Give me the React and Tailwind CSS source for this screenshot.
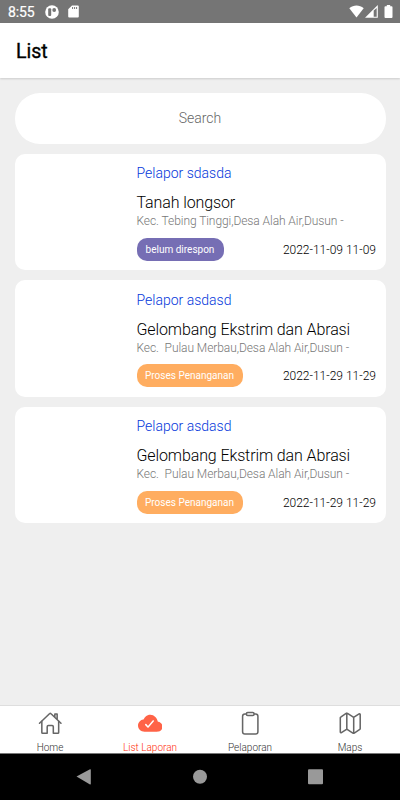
import React from 'react';
import { IoHomeOutline, IoCloudDone, IoClipboardOutline, IoMapOutline } from 'react-icons/io5';

const reports = [
  {
    reporter: 'Pelapor sdasda',
    title: 'Tanah longsor',
    address: 'Kec. Tebing Tinggi,Desa Alah Air,Dusun -',
    status: 'belum direspon',
    statusClass: 'w-[87px] bg-[#766eb4]',
    date: '2022-11-09 11-09',
  },
  {
    reporter: 'Pelapor asdasd',
    title: 'Gelombang Ekstrim dan Abrasi',
    address: 'Kec.  Pulau Merbau,Desa Alah Air,Dusun -',
    status: 'Proses Penanganan',
    statusClass: 'w-[106px] bg-[#ffad60]',
    date: '2022-11-29 11-29',
  },
  {
    reporter: 'Pelapor asdasd',
    title: 'Gelombang Ekstrim dan Abrasi',
    address: 'Kec.  Pulau Merbau,Desa Alah Air,Dusun -',
    status: 'Proses Penanganan',
    statusClass: 'w-[106px] bg-[#ffad60]',
    date: '2022-11-29 11-29',
  },
];

const tabs = [
  { label: 'Home', icon: IoHomeOutline },
  { label: 'List Laporan', icon: IoCloudDone, active: true },
  { label: 'Pelaporan', icon: IoClipboardOutline },
  { label: 'Maps', icon: IoMapOutline },
];

const StatusBar = () => (
  <div className="h-[23px] shrink-0 bg-[#757575] flex items-center pl-[8px] pr-[7px] text-white">
    <span className="text-[14px] leading-none w-[37px] whitespace-nowrap pt-px tracking-[-0.1px] [-webkit-text-stroke:0.2px_white]">8:55</span>
    <svg className="w-[14px] h-[14px]" viewBox="0 0 14 14">
      <circle cx="7" cy="7" r="6.8" fill="#fff" />
      <rect x="3.2" y="3.2" width="3" height="7.8" rx="1" fill="#757575" />
      <circle cx="9.2" cy="5" r="1.9" fill="#757575" />
    </svg>
    <svg className="w-[11px] h-[13px] ml-[9px]" viewBox="0 0 11 13">
      <path d="M4 0.5h5.8a1 1 0 0 1 1 1v10a1 1 0 0 1-1 1H1.2a1 1 0 0 1-1-1V4.3z" fill="#fff" />
      <path d="M4.6 2v2M6.6 2v2M8.6 2v2" stroke="#757575" strokeWidth="1" />
    </svg>
    <div className="ml-auto flex items-center">
      <svg className="w-[15px] h-[13px]" viewBox="0 0 15 13">
        <path d="M0.3 3.2C4.5-0.4 10.5-0.4 14.7 3.2L7.5 12.5z" fill="#fff" />
      </svg>
      <svg className="w-[13px] h-[13px] ml-[1px]" viewBox="0 0 13 13">
        <path d="M0 12.8L12.8 0v12.8z" fill="#fff" />
        <path d="M8.7 5.4L11.7 3v8.7h-3z" fill="#757575" />
      </svg>
      <svg className="w-[9px] h-[13px] ml-[6px]" viewBox="0 0 9 13">
        <path d="M2.8 0h3.4v1.3h1.4a.9.9 0 0 1 .9.9v9.9a.9.9 0 0 1-.9.9H1.4a.9.9 0 0 1-.9-.9V2.2a.9.9 0 0 1 .9-.9h1.4z" fill="#fff" />
      </svg>
    </div>
  </div>
);

const ReportCard = ({ report }) => (
  <div className="h-[116.6px] shrink-0 rounded-[10px] bg-white pl-[122px] pr-[9.5px] flex flex-col">
    <p className="mt-[9.4px] h-[20px] text-[14px] leading-[20px] font-light text-[#0537db]">{report.reporter}</p>
    <p className="mt-[10px] h-[20px] text-[16px] leading-[20px] font-light tracking-[-0.11px] text-black whitespace-nowrap">{report.title}</p>
    <p className="h-[16px] text-[12px] leading-[16px] font-light tracking-[-0.07px] text-[#777] whitespace-pre">{report.address}</p>
    <div className="mt-[8.6px] flex items-center justify-between">
      <span className={`h-[23px] rounded-[10px] text-[10px] leading-[23px] text-center text-white whitespace-nowrap ${report.statusClass}`}>
        {report.status}
      </span>
      <span className="text-[12px] leading-[18px] pt-px font-light text-black">{report.date}</span>
    </div>
  </div>
);

const TabBar = () => (
  <div className="h-[48px] shrink-0 bg-white border-t border-[#dedede] grid grid-cols-4">
    {tabs.map(({ label, icon: Icon, active }) => (
      <div
        key={label}
        className={`flex flex-col items-center pt-[5px] ${active ? 'text-[#ff6347]' : 'text-[#666]'}`}
      >
        <Icon size={24.5} />
        <span className={`mt-[5.5px] text-[10px] leading-[13px] font-light whitespace-nowrap ${active ? 'text-[#ff2d0a]' : 'text-[#333]'}`}>
          {label}
        </span>
      </div>
    ))}
  </div>
);

const AndroidNav = () => (
  <div className="h-[47px] shrink-0 bg-black border-t border-[#777] flex justify-center">
    <svg className="w-[260px] h-[46px]" viewBox="0 0 260 46">
      <path d="M6.5 22.5L20 15.2q.8-.3.8.6v14q0 .9-.8.6z" fill="#999" />
      <circle cx="130" cy="22.7" r="7" fill="#999" />
      <rect x="238" y="15.2" width="15" height="15" rx="1" fill="#999" />
    </svg>
  </div>
);

export default function App() {
  return (
    <div className="w-[400px] h-[800px] overflow-hidden flex flex-col bg-[#efefef] font-['Roboto',sans-serif]">
      <StatusBar />
      <header className="h-[55px] shrink-0 bg-white flex items-center pl-[16px] pt-[2px] shadow-[0_1px_2px_rgba(0,0,0,0.15)]">
        <h1 className="text-[19.5px] leading-[26px] font-normal text-black [-webkit-text-stroke:0.35px_black]">List</h1>
      </header>
      <main className="flex-1 min-h-0 px-[14.5px] pt-[14.5px] flex flex-col gap-[9.8px]">
        <input
          className="h-[51.5px] shrink-0 rounded-[25px] bg-white text-center text-[14px] font-light outline-none placeholder:text-[#666]"
          placeholder="Search"
        />
        {reports.map((report, index) => (
          <ReportCard key={index} report={report} />
        ))}
      </main>
      <TabBar />
      <AndroidNav />
    </div>
  );
}
